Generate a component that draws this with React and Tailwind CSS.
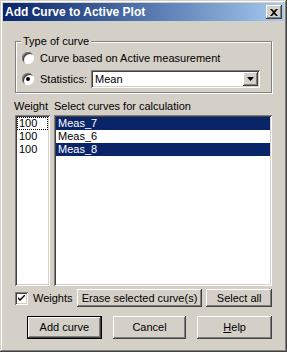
const raised =
  'shadow-[inset_-1px_-1px_#404040,inset_1px_1px_#ffffff,inset_-2px_-2px_#808080,inset_2px_2px_#d4d0c8]';
const sunken =
  'shadow-[inset_1px_1px_#808080,inset_-1px_-1px_#ffffff,inset_2px_2px_#404040,inset_-2px_-2px_#d4d0c8]';

function Radio({ checked }) {
  return (
    <span className="w-3 h-3 rounded-full bg-white shadow-[inset_1px_1px_#808080,inset_-1px_-1px_#ffffff,inset_2px_2px_#404040] flex items-center justify-center shrink-0">
      {checked && <span className="w-1 h-1 rounded-full bg-black" />}
    </span>
  );
}

function Button({ children, className = '', def }) {
  return (
    <button
      className={`h-[23px] bg-[#d4d0c8] text-black text-[11px] ${def ? 'border border-black shadow-[inset_-1px_-1px_#404040,inset_1px_1px_#ffffff,inset_-2px_-2px_#808080]' : raised} ${className}`}
    >
      {children}
    </button>
  );
}

const curves = [
  { name: 'Meas_7', sel: true },
  { name: 'Meas_6', sel: false },
  { name: 'Meas_8', sel: true },
];

export default function App() {
  return (
    <div
      className="w-[287px] h-[352px] bg-[#d4d0c8] p-[3px] flex flex-col antialiased shadow-[inset_-1px_-1px_#404040,inset_1px_1px_#d4d0c8,inset_-2px_-2px_#808080,inset_2px_2px_#ffffff]"
      style={{ fontFamily: '"Liberation Sans", Arial, sans-serif' }}
    >
      {/* Title bar */}
      <div className="h-[18px] flex items-center justify-between pl-[2px] pr-[2px] bg-gradient-to-r from-[#0a246a] to-[#a6caf0]">
        <span className="text-white font-bold text-[12px] leading-none">Add Curve to Active Plot</span>
        <span className={`w-4 h-[14px] bg-[#d4d0c8] ${raised} flex items-center justify-center`}>
          <svg width="8" height="7" viewBox="0 0 8 7">
            <path d="M0 0h2l2 2 2-2h2L5 3.5 8 7H6L4 5 2 7H0l3-3.5z" fill="#000" />
          </svg>
        </span>
      </div>

      <div className="flex-1 flex flex-col px-[12px] pt-[20px] text-[11px] text-black">
        {/* Group box */}
        <div className="relative h-[52px] border border-[#808080] shadow-[1px_1px_#ffffff,inset_1px_1px_#ffffff] pl-[6px] pt-[10px] flex flex-col gap-[9px]">
          <span className="absolute -top-[8px] left-[5px] px-[2px] bg-[#d4d0c8] leading-[14px]">Type of curve</span>
          <div className="flex items-center gap-[6px] h-3">
            <Radio />
            <span>Curve based on Active measurement</span>
          </div>
          <div className="flex items-center h-3">
            <Radio checked />
            <span className="ml-[6px] w-[51px]">Statistics:</span>
            <div className={`w-[169px] h-[18px] bg-white ${sunken} flex items-center justify-between p-[2px]`}>
              <span className="pl-[2px]">Mean</span>
              <span className={`w-[15px] h-[14px] bg-[#d4d0c8] ${raised} flex items-center justify-center`}>
                <svg width="7" height="4" viewBox="0 0 7 4">
                  <path d="M0 0h7L3.5 4z" fill="#000" />
                </svg>
              </span>
            </div>
          </div>
        </div>

        {/* Lists */}
        <div className="flex gap-[4px] mt-[6px] leading-[14px]">
          <span className="w-[35px] -ml-[1px]">Weight</span>
          <span className="pl-[1px]">Select curves for calculation</span>
        </div>
        <div className="flex gap-[4px] mt-[2px] h-[171px]">
          <div className={`w-[35px] bg-white text-black ${sunken} p-[2px] leading-[13px]`}>
            <div className="px-[2px] outline outline-1 outline-dotted outline-black -outline-offset-1">100</div>
            <div className="px-[2px]">100</div>
            <div className="px-[2px]">100</div>
          </div>
          <div className={`flex-1 bg-white ${sunken} p-[2px] leading-[13px]`}>
            {curves.map((c) => (
              <div key={c.name} className={`px-[2px] ${c.sel ? 'bg-[#0a246a] text-white' : ''}`}>
                {c.name}
              </div>
            ))}
          </div>
        </div>

        {/* Weights row */}
        <div className="flex items-center mt-[3px] h-[18px]">
          <span className={`w-[13px] h-[13px] bg-white ${sunken} flex items-center justify-center`}>
            <svg width="7" height="7" viewBox="0 0 7 7">
              <path d="M0 2l2 2 5-5v2L2 6 0 4z" fill="#000" />
            </svg>
          </span>
          <span className="ml-[5px] w-[44px]">Weights</span>
          <Button className="!h-[18px] w-[126px]">Erase selected curve(s)</Button>
          <Button className="!h-[18px] w-[66px] ml-[4px]">Select all</Button>
        </div>

        {/* Main buttons */}
        <div className="flex mt-[9px] pl-[12px] gap-[11px]">
          <Button def className="w-[75px]">Add curve</Button>
          <Button className="w-[74px]">Cancel</Button>
          <Button className="w-[75px]">
            <span className="underline">H</span>elp
          </Button>
        </div>
      </div>
    </div>
  );
}
